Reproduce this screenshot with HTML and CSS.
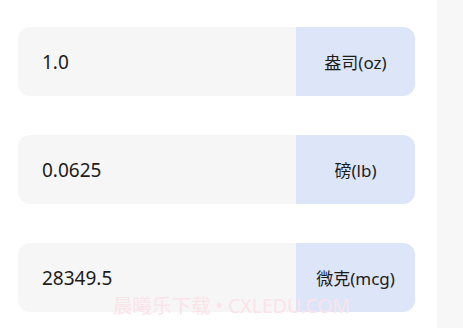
FILE: index.html
```html
<!DOCTYPE html>
<html lang="zh">
<head>
<meta charset="utf-8">
<link rel="stylesheet" href="styles.css">
</head>
<body>
<div class="page">
  <main class="list">
    <div class="row">
      <div class="value">1.0</div>
      <div class="unit">盎司(oz)</div>
    </div>
    <div class="row">
      <div class="value">0.0625</div>
      <div class="unit">磅(lb)</div>
    </div>
    <div class="row">
      <div class="value">28349.5</div>
      <div class="unit">微克(mcg)</div>
    </div>
  </main>
  <aside class="strip"></aside>
</div>
<div class="watermark">晨曦乐下载 • CXLEDU.COM</div>
</body>
</html>
```
FILE: styles.css
```css
html, body {
  margin: 0;
  padding: 0;
  background: #ffffff;
  font-family: "Noto Sans", "Noto Sans CJK SC", sans-serif;
  color: #1c1c1c;
}
.page {
  display: flex;
  width: 463px;
  height: 328px;
  overflow: hidden;
}
.list {
  width: 397px;
  padding: 27px 22px 0 18px;
  display: flex;
  flex-direction: column;
  gap: 39px;
}
.row {
  display: flex;
  height: 69px;
  border-radius: 12px;
  overflow: hidden;
  background: #f6f6f6;
}
.value {
  flex: 1;
  display: flex;
  align-items: center;
  padding-left: 24px;
  font-size: 19px;
  font-family: "Noto Sans", sans-serif;
}
.unit {
  width: 119px;
  background: #dce6f8;
  display: flex;
  align-items: center;
  justify-content: center;
  font-size: 17px;
  font-family: "Noto Sans", "Noto Sans CJK SC", sans-serif;
}
.strip {
  flex: 1;
  background: #f7f7f7;
}
.watermark {
  position: absolute;
  left: 113px;
  top: 290px;
  font-size: 19.5px;
  color: #fbe3ea;
  font-family: "Noto Sans", "Noto Sans CJK SC", sans-serif;
  white-space: nowrap;
}
```
